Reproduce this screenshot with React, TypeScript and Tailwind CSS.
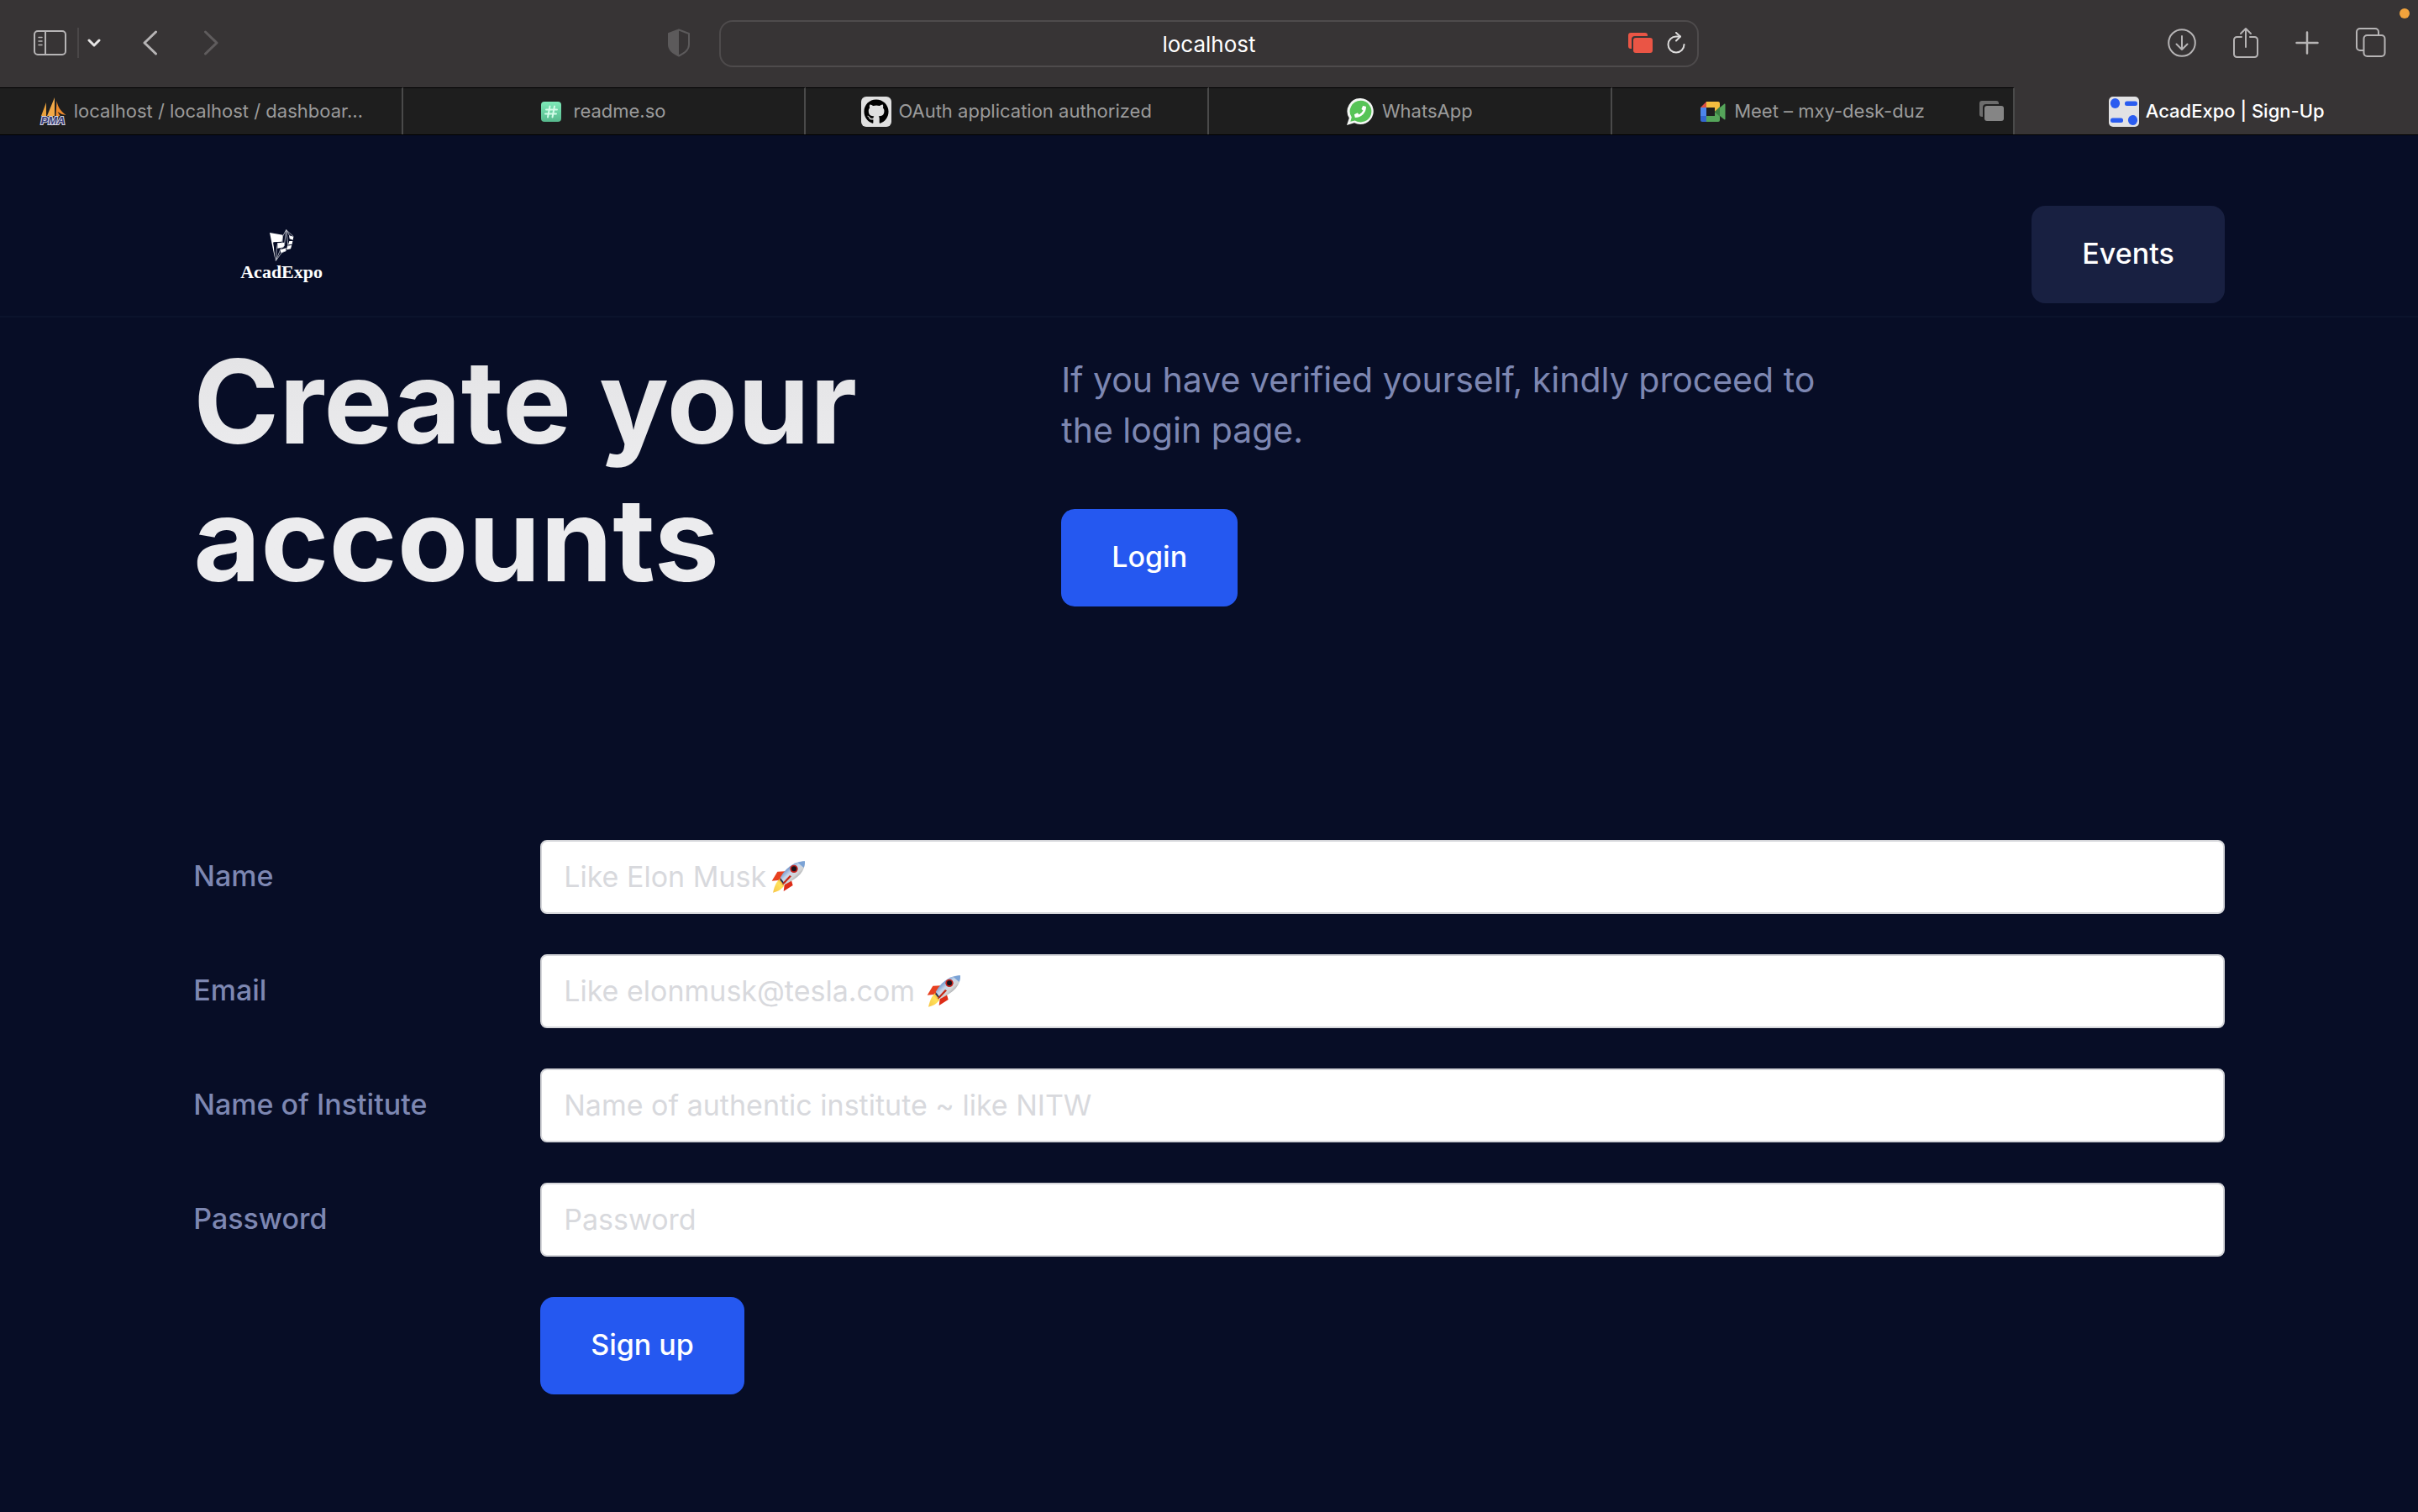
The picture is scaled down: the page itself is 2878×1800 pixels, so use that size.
import type { ReactNode } from 'react';
import { FaGithub, FaPhoneAlt } from 'react-icons/fa';

function SidebarIcon() {
  return (
    <svg width="40" height="32" viewBox="0 0 40 32" fill="none" stroke="#b6b4b5" strokeWidth="2">
      <rect x="1" y="2" width="37" height="28" rx="4" />
      <path d="M14 2v28" />
      <path d="M6 9.5h4M6 14h4M6 18.5h4" strokeWidth="1.5" strokeLinecap="round" />
    </svg>
  );
}

function ShieldIcon() {
  return (
    <svg width="28" height="34" viewBox="0 0 28 34">
      <path d="M14 1.5 26 6v13c0 6-4 9.500-12 13.500C6 28.500 2 25 2 19V6z" fill="none" stroke="#5c5a5b" strokeWidth="2" strokeLinejoin="round" />
      <path d="M14 1.500 2 6v13c0 6 4 9.500 12 13.500z" fill="#5c5a5b" />
    </svg>
  );
}

function StackIcon({ back, front }: { back: string; front: string }) {
  return (
    <svg width="30" height="25" viewBox="0 0 30 25">
      <path d="M3 0h17a3 3 0 0 1 3 3v1H8a4 4 0 0 0-4 4v11H3a3 3 0 0 1-3-3V3a3 3 0 0 1 3-3z" fill={back} />
      <rect x="6" y="6" width="23" height="18" rx="3" fill={front} />
    </svg>
  );
}

function ReloadIcon() {
  return (
    <svg width="22" height="26" viewBox="0 0 22 26" fill="none" stroke="#dddcdc" strokeWidth="2" strokeLinecap="round" strokeLinejoin="round">
      <path d="M20.500 15A9.500 9.500 0 1 1 11 5.500h5" />
      <path d="M11 1l5 4.500-5 5" />
    </svg>
  );
}

function DownloadIcon() {
  return (
    <svg width="34" height="34" viewBox="0 0 34 34" fill="none" stroke="#b6b4b5" strokeWidth="2" strokeLinecap="round" strokeLinejoin="round">
      <circle cx="17" cy="17" r="15.800" />
      <path d="M17 9v16M10.500 18.500 17 25l6.500-6.500" />
    </svg>
  );
}

function ShareIcon() {
  return (
    <svg width="30" height="38" viewBox="0 0 30 38" fill="none" stroke="#b6b4b5" strokeWidth="2" strokeLinecap="round" strokeLinejoin="round">
      <path d="M10 12H4.500A3.500 3.500 0 0 0 1 15.500v17A3.500 3.500 0 0 0 4.500 36h21a3.500 3.500 0 0 0 3.500-3.500v-17a3.500 3.500 0 0 0-3.500-3.500H20" />
      <path d="M15 24V2M9 8l6-6 6 6" />
    </svg>
  );
}

function PlusIcon() {
  return (
    <svg width="28" height="28" viewBox="0 0 28 28" stroke="#b6b4b5" strokeWidth="2.500" strokeLinecap="round">
      <path d="M14 1.500v25M1.500 14h25" />
    </svg>
  );
}

function TabsIcon() {
  return (
    <svg width="36" height="36" viewBox="0 0 36 36" fill="none" stroke="#b6b4b5" strokeWidth="2">
      <rect x="9.500" y="9" width="25" height="25" rx="4" />
      <path d="M9.500 27H5a4 4 0 0 1-4-4V5a4 4 0 0 1 4-4h18a4 4 0 0 1 4 4v4" />
    </svg>
  );
}

function PmaIcon() {
  return (
    <svg width="34" height="34" viewBox="0 0 34 34">
      <path d="M9 6 3 22h6z" fill="#e8a03c" />
      <path d="M19 0 10 22h9z" fill="#f2a948" />
      <path d="M21.500 4c1 6 4 12 11 17l-5-1-5-3 3 5h-5z" fill="#ee8a2c" />
      <text x="17" y="32" textAnchor="middle" fontFamily="Liberation Sans" fontWeight="700" fontStyle="italic" fontSize="13" fill="#3b3f7a" stroke="#d8d8e4" strokeWidth="2" paintOrder="stroke">
        PMA
      </text>
    </svg>
  );
}

function ReadmeIcon() {
  return (
    <span className="flex size-6 items-center justify-center rounded bg-linear-to-b from-[#7eebb9] to-[#57b98d]">
      <svg width="18" height="18" viewBox="0 0 18 18" stroke="#d3fbe8" strokeWidth="2" strokeLinecap="round">
        <path d="M7.500 2.500 5 15.500M13 2.500l-2.500 13M3 6.500h13M2 11.500h13" />
      </svg>
    </span>
  );
}

function GithubIcon() {
  return (
    <span className="flex size-9 items-center justify-center rounded-md bg-[#e0e0e0]">
      <FaGithub size={30} color="#000000" />
    </span>
  );
}

function WhatsappIcon() {
  return (
    <span className="relative flex size-8 items-center justify-center">
      <svg className="absolute inset-0" width="32" height="32" viewBox="0 0 32 32">
        <path d="M16.500 0a15.500 15.500 0 1 1-7.500 29.200L0 32l2.800-8.500A15.500 15.500 0 0 1 16.500 0z" fill="#f4f7f4" />
        <path d="M16.500 2.800a12.800 12.800 0 1 1-6.800 23.600L4.300 27.800l1.500-5.200A12.800 12.800 0 0 1 16.500 2.800z" fill="#57c457" />
      </svg>
      <FaPhoneAlt className="relative -scale-x-100" size={14} color="#ffffff" />
    </span>
  );
}

function MeetIcon() {
  return (
    <svg width="30" height="24" viewBox="0 0 30 24">
      <path d="M7 0v7H0z" fill="#dc4f43" />
      <path d="M0 7h7v10H0z" fill="#4d86ec" />
      <path d="M0 17h7v7H2a2 2 0 0 1-2-2z" fill="#3367d0" />
      <path d="M7 0h14a2 2 0 0 1 2 2v5l-6 5V7H7z" fill="#f4bd3f" />
      <path d="M7 17h10v-5l6 5v5a2 2 0 0 1-2 2H7z" fill="#55a55a" />
      <path d="m17 12 6-6v12z" fill="#3b7f41" />
      <path d="m23 7 5-4c1-.8 1.500-.5 1.500.5v17c0 1-.5 1.300-1.500.5l-5-4z" fill="#55a55a" />
    </svg>
  );
}

function AcadExpoIcon() {
  return (
    <svg width="36" height="36" viewBox="0 0 36 36" fill="#2a5cf0">
      <rect width="36" height="36" rx="5" fill="#e2e2e4" />
      <ellipse cx="7.500" cy="8" rx="5.600" ry="6" />
      <rect x="19" y="5.500" width="15" height="5.500" rx="2.500" />
      <rect x="2" y="25.500" width="15" height="5.500" rx="2.500" />
      <ellipse cx="28.500" cy="28" rx="5.600" ry="6" />
    </svg>
  );
}

function LogoMark() {
  return (
    <svg width="31" height="39" viewBox="0 0 93 117">
      <g fill="#ffffff">
        <path d="M3 12 50 20l-3 24-31 2 7 66z" />
        <path d="M88 26 72 22l2 12 12 4zM85 42H73l-4 13 14-2zM82 56l-16 3-3 14 15-3z" />
      </g>
      <path d="M16 48 48 44l-6 14-22 4 4 44z" fill="#070d26" />
      <path d="m31 49 25-2-3 17-22 4zM42 72l20-5-2 11-18 6z" fill="#ffffff" />
      <path d="M25 112 28 70l4-22M25 112l18-44 12-8 7-58M25 112l20-28 18-8M62 2l-12 22-3 28M62 2l7 60M62 2l14 24M62 2l26 24" fill="none" stroke="#c3c6d0" strokeWidth="2.500" />
    </svg>
  );
}

function Rocket() {
  return (
    <svg width="42" height="40" viewBox="0 0 126 120">
      <defs>
        <linearGradient id="body" x1="0" y1="0" x2="1" y2="1">
          <stop offset="0.250" stopColor="#5d86c4" />
          <stop offset="0.450" stopColor="#c6d6ea" />
          <stop offset="0.600" stopColor="#d4d5d6" />
          <stop offset="0.850" stopColor="#77797e" />
        </linearGradient>
        <linearGradient id="flame" x1="1" y1="0" x2="0" y2="1">
          <stop offset="0" stopColor="#e98a1d" />
          <stop offset="0.400" stopColor="#ffe25a" />
          <stop offset="1" stopColor="#f7c548" />
        </linearGradient>
      </defs>
      <path d="M50 40 22 41 2 74l30-3z" fill="#e8401f" />
      <path d="M44 111 47 88 70 66l7 24z" fill="#dd2c17" />
      <path d="M30 66c-8 8-18 22-24 50 20-5 32-12 40-26z" fill="url(#flame)" />
      <path d="M30 70 44 87l8-8-14-16z" fill="#27324d" />
      <path d="M120 4C92 4 60 16 32 62l18 24c48-22 72-48 70-82z" fill="url(#body)" />
      <path d="M120 4c-9 0-17 1.500-25 5l21 18c3-7 4.500-14 4-23z" fill="#7ba3d6" />
      <path d="M66 54 44 78l-6 9 10-4 24-25z" fill="#c62815" />
      <circle cx="81" cy="31" r="14" fill="#c3221c" />
      <circle cx="81" cy="31" r="9" fill="#16141c" />
    </svg>
  );
}

type Tab = { title: string; icon: ReactNode; gap: string; active?: boolean; sharing?: boolean };

const tabs: Tab[] = [
  { title: 'localhost / localhost / dashboar…', icon: <PmaIcon />, gap: 'gap-2' },
  { title: 'readme.so', icon: <ReadmeIcon />, gap: 'gap-3.5' },
  { title: 'OAuth application authorized', icon: <GithubIcon />, gap: 'gap-2' },
  { title: 'WhatsApp', icon: <WhatsappIcon />, gap: 'gap-2.5' },
  { title: 'Meet – mxy-desk-duz', icon: <MeetIcon />, gap: 'gap-2.5', sharing: true },
  { title: 'AcadExpo | Sign-Up', icon: <AcadExpoIcon />, gap: 'gap-2', active: true },
];

function BrowserBar() {
  return (
    <div className="bg-[#373435]">
      <div className="relative grid h-[104px] grid-cols-[1fr_minmax(0,1166px)_1fr] items-center">
        <div className="flex items-center pr-[34px] pb-0.5 pl-10">
          <button type="button" aria-label="Show sidebar"><SidebarIcon /></button>
          <span className="ml-3 h-9 w-0.5 bg-[#4a4748]" />
          <button type="button" aria-label="Tab groups" className="ml-2.5">
            <svg width="16" height="12" viewBox="0 0 16 12" fill="none" stroke="#e6e5e5" strokeWidth="3" strokeLinecap="round" strokeLinejoin="round">
              <path d="m2 3 6 6 6-6" />
            </svg>
          </button>
          <button type="button" aria-label="Back" className="ml-[50px]">
            <svg width="18" height="30" viewBox="0 0 18 30" fill="none" stroke="#b6b4b5" strokeWidth="3" strokeLinecap="round" strokeLinejoin="round">
              <path d="M15.500 2 2 15l13.500 13" />
            </svg>
          </button>
          <button type="button" aria-label="Forward" className="ml-[54px]">
            <svg width="18" height="30" viewBox="0 0 18 30" fill="none" stroke="#5f5c5d" strokeWidth="3" strokeLinecap="round" strokeLinejoin="round">
              <path d="M2.500 2 16 15 2.500 28" />
            </svg>
          </button>
          <button type="button" aria-label="Privacy report" className="ml-auto"><ShieldIcon /></button>
        </div>
        <div className="relative">
          <input
            aria-label="Address"
            defaultValue="localhost"
            className="h-14 w-full rounded-2xl border-2 border-[#4e4b4c] bg-transparent text-center text-[26px] text-white"
          />
          <div className="absolute inset-y-0 right-4 flex items-center gap-4 pb-0.5">
            <StackIcon back="#ea5545" front="#ea5545" />
            <button type="button" aria-label="Reload"><ReloadIcon /></button>
          </div>
        </div>
        <div className="flex items-center justify-end gap-11 pr-[38px] pb-0.5">
          <button type="button" aria-label="Downloads"><DownloadIcon /></button>
          <button type="button" aria-label="Share"><ShareIcon /></button>
          <button type="button" aria-label="New tab"><PlusIcon /></button>
          <button type="button" aria-label="Show all tabs"><TabsIcon /></button>
        </div>
        <span className="absolute top-2.5 right-2.5 size-3 rounded-full bg-[#f2a33c]" />
      </div>
      <div role="tablist" className="grid grid-cols-6 border-b border-black">
        {tabs.map((tab) => (
          <button
            key={tab.title}
            type="button"
            role="tab"
            aria-selected={!!tab.active}
            className={
              tab.active
                ? 'flex h-14 items-center justify-center pt-px text-[22px] font-medium text-white'
                : 'relative flex h-14 items-center justify-center border-t border-r-2 border-t-black border-r-[#4a4a4a] bg-[#1e1e1e] text-[22px] text-[#9b9b9b]'
            }
          >
            <span className={`flex items-center ${tab.gap}`}>
              {tab.icon}
              <span className="whitespace-nowrap">{tab.title}</span>
            </span>
            {tab.sharing && (
              <span className="absolute right-2.5">
                <StackIcon back="#6c6c6c" front="#858585" />
              </span>
            )}
          </button>
        ))}
      </div>
    </div>
  );
}

const fields = [
  { id: 'name', label: 'Name', type: 'text', placeholder: 'Like Elon Musk', rocket: 'left-[275px]' },
  { id: 'email', label: 'Email', type: 'email', placeholder: 'Like elonmusk@tesla.com', rocket: 'left-[460px]' },
  { id: 'institute', label: 'Name of Institute', type: 'text', placeholder: 'Name of authentic institute ~ like NITW' },
  { id: 'password', label: 'Password', type: 'password', placeholder: 'Password' },
];

const buttonClass = 'inline-flex h-[116px] items-center rounded-2xl px-[60px] pb-1 text-[34px] font-medium text-white';

export default function App() {
  return (
    <div className="flex min-h-screen flex-col bg-[#070d26] font-[Inter,sans-serif]">
      <BrowserBar />
      <header className="flex items-start justify-between border-b-2 border-[#0b132c] px-[8%] pt-[84px] pb-[15px]">
        <a href="#home" className="mt-7 ml-14 flex flex-col items-center">
          <LogoMark />
          <span className="font-['Liberation_Serif',serif] text-[22px] leading-6 font-bold text-white">AcadExpo</span>
        </a>
        <a href="#events" className={`${buttonClass} bg-[#182041]`}>Events</a>
      </header>
      <main className="px-[8%] pb-[140px]">
        <section className="grid grid-cols-[1033px_minmax(0,1fr)] pt-4">
          <h1 className="bg-linear-to-b from-[#e2e2e4] to-[#ececee] to-50% bg-clip-text pt-0.5 text-[138px] leading-[164px] font-bold text-transparent">
            Create your accounts
          </h1>
          <div className="pt-7">
            <p className="max-w-[960px] text-[41px] leading-[60px] text-[#7d87b2]">
              If you have verified yourself, kindly proceed to the login page.
            </p>
            <a href="#login" className={`${buttonClass} mt-16 bg-[#2558f0]`}>Login</a>
          </div>
        </section>
        <form className="mt-[276px] flex flex-col gap-12">
          {fields.map((field) => (
            <div key={field.id} className="grid grid-cols-[413px_minmax(0,1fr)] items-center">
              <label htmlFor={field.id} className="pb-1 text-[34px] font-medium text-[#7d87b2]">{field.label}</label>
              <div className="relative">
                <input
                  id={field.id}
                  type={field.type}
                  placeholder={field.placeholder}
                  className="peer block h-[88px] w-full rounded-lg border-2 border-[#d5d6da] bg-white px-[26px] pb-0.5 text-[34px] text-gray-900 placeholder:text-[#d8d9dd]"
                />
                {field.rocket && (
                  <span className={`pointer-events-none absolute inset-y-0 hidden items-center peer-placeholder-shown:flex ${field.rocket}`}>
                    <Rocket />
                  </span>
                )}
              </div>
            </div>
          ))}
          <div className="pl-[413px]">
            <button type="submit" className={`${buttonClass} bg-[#2558f0]`}>Sign up</button>
          </div>
        </form>
      </main>
    </div>
  );
}
